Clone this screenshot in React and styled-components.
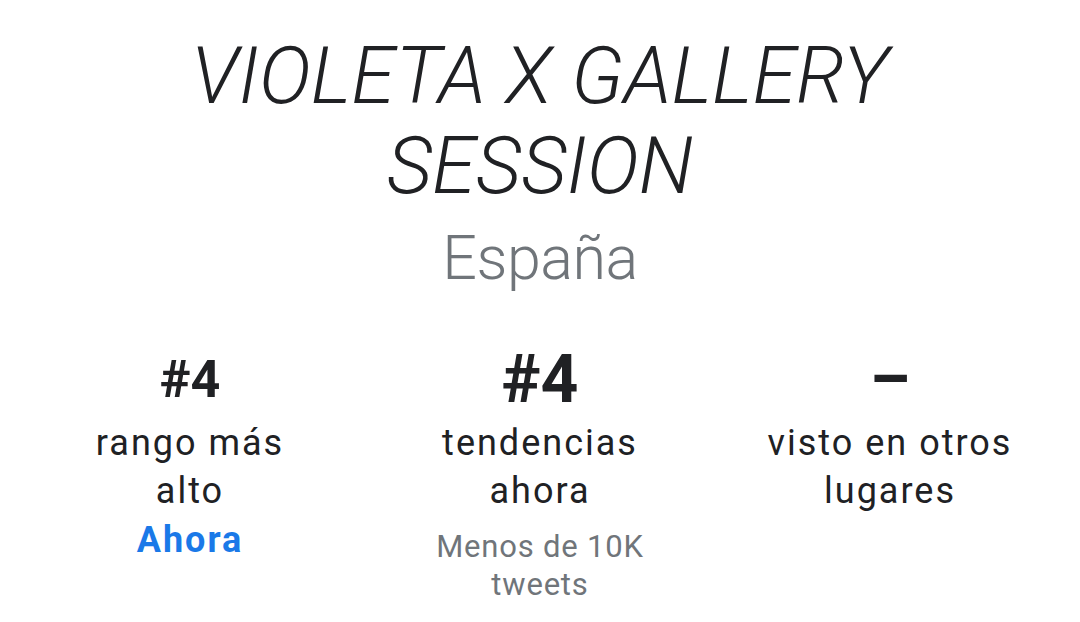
import React from 'react';
import styled, { createGlobalStyle } from 'styled-components';

const GlobalStyle = createGlobalStyle`
  html, body {
    margin: 0;
    padding: 0;
    background: #ffffff;
  }
  body {
    font-family: Roboto, "Noto Sans", "Liberation Sans", sans-serif;
    color: #202124;
  }
`;

const stats = [
  { value: '#4', size: 52, label: 'rango más alto', note: 'Ahora', noteKind: 'time' },
  { value: '#4', size: 66, label: 'tendencias ahora', note: 'Menos de 10K tweets', noteKind: 'volume' },
  { value: '–', size: 64, label: 'visto en otros lugares' },
];

function App() {
  return (
    <Page>
      <GlobalStyle />
      <Title>VIOLETA X GALLERY SESSION</Title>
      <Region>España</Region>
      <StatsRow>
        {stats.map((s, i) => (
          <Stat key={i}>
            <Value size={s.size}>{s.value}</Value>
            <Label>{s.label}</Label>
            {s.note && <Note kind={s.noteKind}>{s.note}</Note>}
          </Stat>
        ))}
      </StatsRow>
    </Page>
  );
}

export default App;

const Page = styled.div`
  width: 1080px;
  min-height: 622px;
  padding-top: 31px;
  box-sizing: border-box;
  display: flex;
  flex-direction: column;
  align-items: center;
  text-align: center;
`;

const Title = styled.h1`
  margin: 0;
  width: 760px;
  font-size: 79px;
  line-height: 90px;
  font-weight: 300;
  font-style: italic;
  color: #202124;
`;

const Region = styled.div`
  margin-top: 11px;
  font-size: 61px;
  line-height: 72px;
  font-weight: 300;
  letter-spacing: -0.5px;
  color: #70757a;
`;

const StatsRow = styled.div`
  margin-top: 45px;
  display: grid;
  grid-template-columns: repeat(3, 350px);
`;

const Stat = styled.div`
  display: flex;
  flex-direction: column;
  align-items: center;
  padding: 0 47px;
`;

const Value = styled.div`
  height: 80px;
  display: flex;
  align-items: center;
  justify-content: center;
  font-size: ${(p) => p.size}px;
  font-weight: 700;
  color: #202124;
`;

const Label = styled.div`
  font-size: 36px;
  line-height: 48px;
  letter-spacing: 2px;
  color: #202124;
`;

const Note = styled.div`
  font-size: ${(p) => (p.kind === 'time' ? 36 : 31)}px;
  line-height: ${(p) => (p.kind === 'time' ? 50 : 38)}px;
  font-weight: ${(p) => (p.kind === 'time' ? 700 : 400)};
  letter-spacing: ${(p) => (p.kind === 'time' ? 2 : 0.8)}px;
  color: ${(p) => (p.kind === 'time' ? '#1a79e8' : '#70757a')};
  margin-top: ${(p) => (p.kind === 'time' ? 0 : 13)}px;
`;
